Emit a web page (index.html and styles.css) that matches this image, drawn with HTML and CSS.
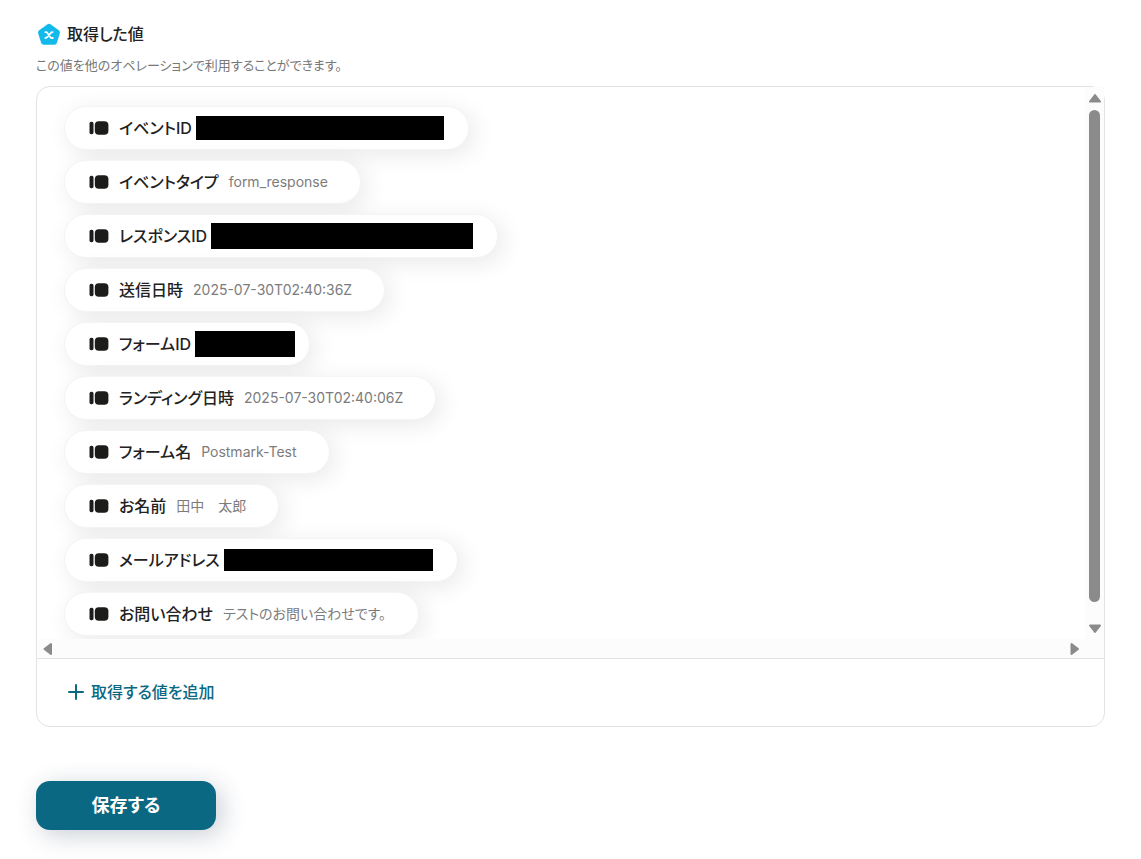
FILE: index.html
```html
<!DOCTYPE html>
<html lang="ja">
<head>
  <meta charset="UTF-8">
  <meta name="viewport" content="width=device-width, initial-scale=1">
  <title>取得した値</title>
  <link rel="stylesheet" href="styles.css">
</head>
<body>
  <svg width="0" height="0" class="defs" aria-hidden="true">
    <symbol id="chip" viewBox="0 0 20 14">
      <rect x="0.5" y="0.7" width="4" height="12.6" rx="1.7"/>
      <rect x="5.8" y="0.3" width="13.6" height="13.4" rx="4"/>
    </symbol>
  </svg>

  <main class="page">
    <h1 class="title">
      <svg class="title-icon" viewBox="0 0 24 24" aria-hidden="true">
        <path class="pentagon" d="M10.2 2.4 Q12 1.1 13.8 2.4 L21.8 8.2 Q23.4 9.4 22.8 11.4 L19.8 21 Q19.2 22.8 17.4 22.8 H6.6 Q4.8 22.8 4.2 21 L1.2 11.4 Q0.6 9.4 2.2 8.2 Z"/>
        <path class="x" d="M8.4 10.2 H9.2 Q9.9 10.2 10.4 10.9 L13.6 15.4 Q14 16 14.8 16 H15.8 M15.6 10.2 Q14.5 10.1 13.8 11 L10.2 15.2 Q9.4 16.1 8.4 16"/>
      </svg>
      取得した値
    </h1>
    <p class="lead">この値を他のオペレーションで利用することができます。</p>

    <section class="panel">
      <div class="viewport">
        <ul class="values">
          <li class="pill masked"><svg class="chip"><use href="#chip"/></svg><span class="label">イベントID</span><span class="mask mask-event"></span></li>
          <li class="pill"><svg class="chip"><use href="#chip"/></svg><span class="label">イベントタイプ</span><span class="value">form_response</span></li>
          <li class="pill masked"><svg class="chip"><use href="#chip"/></svg><span class="label">レスポンスID</span><span class="mask mask-response"></span></li>
          <li class="pill"><svg class="chip"><use href="#chip"/></svg><span class="label">送信日時</span><span class="value">2025-07-30T02:40:36Z</span></li>
          <li class="pill masked short"><svg class="chip"><use href="#chip"/></svg><span class="label">フォームID</span><span class="mask mask-form"></span></li>
          <li class="pill"><svg class="chip"><use href="#chip"/></svg><span class="label">ランディング日時</span><span class="value">2025-07-30T02:40:06Z</span></li>
          <li class="pill"><svg class="chip"><use href="#chip"/></svg><span class="label">フォーム名</span><span class="value">Postmark-Test</span></li>
          <li class="pill"><svg class="chip"><use href="#chip"/></svg><span class="label">お名前</span><span class="value">田中　太郎</span></li>
          <li class="pill masked"><svg class="chip"><use href="#chip"/></svg><span class="label">メールアドレス</span><span class="mask mask-mail"></span></li>
          <li class="pill"><svg class="chip"><use href="#chip"/></svg><span class="label">お問い合わせ</span><span class="value">テストのお問い合わせです。</span></li>
        </ul>
        <div class="bar-v">
          <svg class="arrow" viewBox="0 0 14 12"><path d="M7 3 L12 9.5 H2 Z"/></svg>
          <div class="thumb"></div>
          <svg class="arrow" viewBox="0 0 14 12"><path d="M7 9 L2 2.5 H12 Z"/></svg>
        </div>
        <div class="bar-h">
          <svg class="arrow-h" viewBox="0 0 12 14"><path d="M2.5 7 L9 2 V12 Z"/></svg>
          <svg class="arrow-h" viewBox="0 0 12 14"><path d="M10 7 L3.5 2 V12 Z"/></svg>
        </div>
      </div>
      <div class="panel-footer">
        <button type="button" class="add">
          <svg viewBox="0 0 16 16" aria-hidden="true"><path d="M8 1 V15 M1 8 H15"/></svg>
          取得する値を追加
        </button>
      </div>
    </section>

    <button type="submit" class="save">保存する</button>
  </main>
</body>
</html>
```

FILE: styles.css
```css
* {
  box-sizing: border-box;
}

body {
  margin: 0;
  background: #fff;
  color: #222;
  font-family: Inter, "Noto Sans CJK JP", sans-serif;
  font-feature-settings: "palt";
}

button {
  font: inherit;
  font-feature-settings: inherit;
  border: 0;
  cursor: pointer;
}

.defs {
  position: absolute;
}

.page {
  padding: 22px 36px 28px;
}

.title {
  display: flex;
  align-items: center;
  gap: 6px;
  margin: 0;
  padding-left: 1px;
  font-size: 16px;
  line-height: 24px;
  font-weight: 500;
}

.title-icon {
  width: 24px;
  height: 24px;
}

.pentagon {
  fill: #12b9ea;
}

.x {
  fill: none;
  stroke: #fff;
  stroke-width: 1.8;
  stroke-linecap: round;
}

.lead {
  margin: 10px 0 12px;
  font-size: 13px;
  line-height: 18px;
  color: #777;
}

.panel {
  border: 1px solid #e3e3e3;
  border-radius: 14px;
}

.viewport {
  display: grid;
  grid-template-columns: 1fr 19px;
  grid-template-rows: auto 19px;
}

.values {
  display: flex;
  flex-direction: column;
  align-items: flex-start;
  gap: 10px;
  margin: 0;
  padding: 19px 27px 3px;
  list-style: none;
  overflow: hidden;
  border-radius: 13px 0 0 0;
}

.pill {
  display: flex;
  align-items: center;
  height: 44px;
  padding: 0 32px 0 24px;
  border: 1px solid #f4f4f4;
  border-radius: 22px;
  background: #fff;
  box-shadow: 5px 5px 24px rgba(0, 0, 0, 0.09);
  white-space: nowrap;
}

.masked {
  padding-right: 24px;
}

.short {
  padding-right: 14px;
}

.chip {
  width: 20px;
  height: 14px;
  margin-right: 10px;
  fill: #1c1c1a;
}

.label {
  font-size: 16px;
  line-height: 24px;
  font-weight: 500;
}

.value {
  margin-left: 10px;
  font-size: 14px;
  line-height: 20px;
  color: #7c7c7c;
}

.mask {
  height: 26px;
  margin-left: 4px;
  background: #000;
}

.mask-event {
  width: 248px;
  height: 24px;
}

.mask-response {
  width: 262px;
}

.mask-form {
  width: 100px;
}

.mask-mail {
  width: 209px;
  height: 22px;
}

.bar-v {
  grid-column: 2;
  grid-row: 1;
  display: flex;
  flex-direction: column;
  align-items: center;
  padding: 5px 0 4px;
  background: #fcfcfc;
}

.arrow {
  width: 14px;
  height: 12px;
}

.arrow-h {
  width: 12px;
  height: 14px;
}

.arrow path,
.arrow-h path {
  fill: #8b8b8b;
  stroke: #8b8b8b;
  stroke-width: 2;
  stroke-linejoin: round;
}

.thumb {
  flex: 1;
  width: 11px;
  margin: 6px 0 21px;
  border-radius: 6px;
  background: #8b8b8b;
}

.bar-h {
  grid-column: 1 / 3;
  grid-row: 2;
  display: flex;
  align-items: center;
  justify-content: space-between;
  padding: 0 24px 0 5px;
  background: #fcfcfc;
}

.panel-footer {
  padding: 21px 31px 22px;
  border-top: 1px solid #e3e3e3;
}

.add {
  display: flex;
  align-items: center;
  gap: 7px;
  padding: 0;
  background: none;
  color: #0b6883;
  font-size: 16px;
  line-height: 24px;
  font-weight: 500;
}

.add svg {
  width: 16px;
  height: 16px;
  fill: none;
  stroke: currentColor;
  stroke-width: 2;
  stroke-linecap: round;
}

.save {
  display: block;
  width: 180px;
  height: 49px;
  margin-top: 54px;
  padding: 0;
  border-radius: 14px;
  background: #0b6883;
  color: #fff;
  font-size: 18px;
  line-height: 24px;
  font-weight: 700;
  box-shadow: 5px 5px 24px rgba(30, 50, 80, 0.24);
}
```
